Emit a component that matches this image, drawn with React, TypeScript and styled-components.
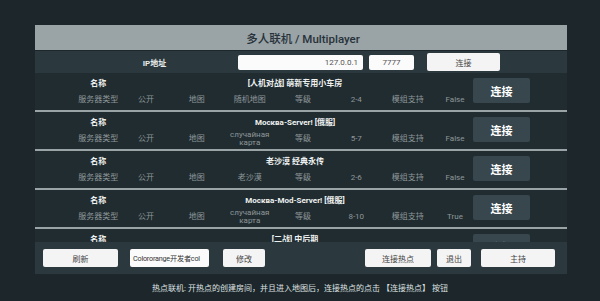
import React from 'react';
import styled, { createGlobalStyle } from 'styled-components';

const servers = [
	{ name: '[人机对战] 萌新专用小车房', type: '公开', map: '随机地图', level: '2-4', mods: 'False' },
	{ name: 'Москва-Server! [俄服]', type: '公开', map: 'случайная карта', level: '5-7', mods: 'False' },
	{ name: '老沙漠 经典永传', type: '公开', map: '老沙漠', level: '2-6', mods: 'False' },
	{ name: 'Москва-Mod-Server! [俄服]', type: '公开', map: 'случайная карта', level: '8-10', mods: 'True' },
	{ name: '[二战] 中后期', type: '公开', map: '随机地图', level: '4-8', mods: 'False' },
];

const App = () => {
	return (
		<>
			<GlobalStyle />
			<Page>
				<Panel>
					<TitleBar>多人联机 / Multiplayer</TitleBar>
					<IpRow>
						<IpLabel>IP地址</IpLabel>
						<Field width={125} align='right'>127.0.0.1</Field>
						<Field width={45} align='center' gap={6}>7777</Field>
						<LightButton width={73} gap={13}>
							连接
						</LightButton>
					</IpRow>
					<List>
						{servers.map((s, i) => (
							<ServerRow key={i}>
								<Info>
									<Label>名称</Label>
									<Name>{s.name}</Name>
									<Detail>服务器类型</Detail>
									<Detail>{s.type}</Detail>
									<Detail>地图</Detail>
									<Detail>{s.map}</Detail>
									<Detail>等级</Detail>
									<Detail>{s.level}</Detail>
									<Detail>模组支持</Detail>
									<Detail>{s.mods}</Detail>
								</Info>
								<ConnectButton>连接</ConnectButton>
							</ServerRow>
						))}
					</List>
					<BottomBar>
						<LightButton width={75}>刷新</LightButton>
						<Field width={79} align='left' gap={12} dark>
							Colororange开发者col
						</Field>
						<LightButton width={42} gap={14}>
							修改
						</LightButton>
						<Spacer />
						<LightButton width={66}>连接热点</LightButton>
						<LightButton width={34} gap={6}>
							退出
						</LightButton>
						<LightButton width={74} gap={10}>
							主持
						</LightButton>
					</BottomBar>
				</Panel>
				<Hint>热点联机: 开热点的创建房间，并且进入地图后，连接热点的点击 【连接热点】 按钮</Hint>
			</Page>
		</>
	);
};

const GlobalStyle = createGlobalStyle`
	html, body {
		margin: 0;
		padding: 0;
		background: #1d272b;
	}
	body {
		font-family: Roboto, 'Noto Sans CJK SC', sans-serif;
	}
`;

const Page = styled.div`
	width: 600px;
	height: 301px;
	padding-top: 25px;
	box-sizing: border-box;
	background: #1d272b;
	overflow: hidden;
`;

const Panel = styled.div`
	width: 532px;
	margin-left: 35px;
	display: flex;
	flex-direction: column;
	background: #212c30;
`;

const TitleBar = styled.div`
	height: 25px;
	display: flex;
	align-items: center;
	justify-content: center;
	padding-left: 4px;
	background: #9aa3a6;
	color: #27323a;
	font-size: 11.5px;
	font-weight: 500;
`;

const IpRow = styled.div`
	height: 23px;
	display: flex;
	align-items: center;
	background: #2b383d;
	border-top: 1px solid #1d272b;
	box-sizing: border-box;
`;

const IpLabel = styled.div`
	width: 203px;
	padding-left: 36px;
	box-sizing: border-box;
	text-align: center;
	color: #e8ecec;
	font-size: 8px;
	font-weight: 700;
`;

const Field = styled.div<{ width: number; align: string; gap?: number; dark?: boolean }>`
	width: ${(p) => p.width}px;
	height: ${(p) => (p.dark ? 18 : 15)}px;
	margin-left: ${(p) => p.gap || 0}px;
	display: flex;
	align-items: center;
	justify-content: ${(p) => (p.align === 'right' ? 'flex-end' : p.align === 'center' ? 'center' : 'flex-start')};
	padding: 0 ${(p) => (p.dark ? 3 : 5)}px;
	box-sizing: border-box;
	background: #fbfbfb;
	border-radius: 2px;
	color: ${(p) => (p.dark ? '#333' : '#555')};
	font-size: ${(p) => (p.dark ? 7.2 : 8)}px;
	letter-spacing: ${(p) => (p.dark ? '-0.2px' : '0')};
	white-space: nowrap;
	overflow: hidden;
	flex-shrink: 0;
`;

const LightButton = styled.div<{ width: number; gap?: number }>`
	width: ${(p) => p.width}px;
	height: 18px;
	margin-left: ${(p) => p.gap || 0}px;
	display: flex;
	align-items: center;
	justify-content: center;
	background: #f4f4f4;
	border-radius: 2px;
	color: #444;
	font-size: 8px;
	flex-shrink: 0;
`;

const List = styled.div`
	height: 169px;
	overflow: hidden;
	display: flex;
	flex-direction: column;
`;

const ServerRow = styled.div`
	height: 39px;
	flex-shrink: 0;
	display: flex;
	box-sizing: border-box;
	border-bottom: 2px solid #9aa4a6;
	background: #212c30;
`;

const Info = styled.div`
	width: 438px;
	padding: 2px 0 0 40px;
	box-sizing: border-box;
	display: grid;
	grid-template-columns: 46.5px 49px 52.5px 53.5px 53px 53.5px 49.5px 45px;
	grid-template-rows: 14px 16px;
	row-gap: 3px;
	align-items: center;
`;

const Label = styled.div`
	text-align: center;
	color: #eef1f1;
	font-size: 8px;
	font-weight: 700;
`;

const Name = styled.div`
	grid-column: 2 / span 7;
	padding-right: 9px;
	text-align: center;
	color: #eef1f1;
	font-size: 8px;
	font-weight: 700;
	white-space: nowrap;
`;

const Detail = styled.div`
	text-align: center;
	color: #8e979a;
	font-size: 8px;
	line-height: 8px;
`;

const ConnectButton = styled.div`
	width: 57px;
	height: 25px;
	margin-top: 5px;
	display: flex;
	align-items: center;
	justify-content: center;
	background: #37474d;
	border-radius: 2px;
	color: #ffffff;
	font-size: 11px;
	font-weight: 700;
`;

const BottomBar = styled.div`
	height: 32px;
	display: flex;
	align-items: center;
	padding: 0 12px 0 8px;
	background: #2b383d;
	box-sizing: border-box;
`;

const Spacer = styled.div`
	flex: 1;
`;

const Hint = styled.div`
	margin-top: 10px;
	text-align: center;
	color: #dde2e2;
	font-size: 8px;
	line-height: 10px;
`;

export default App;
